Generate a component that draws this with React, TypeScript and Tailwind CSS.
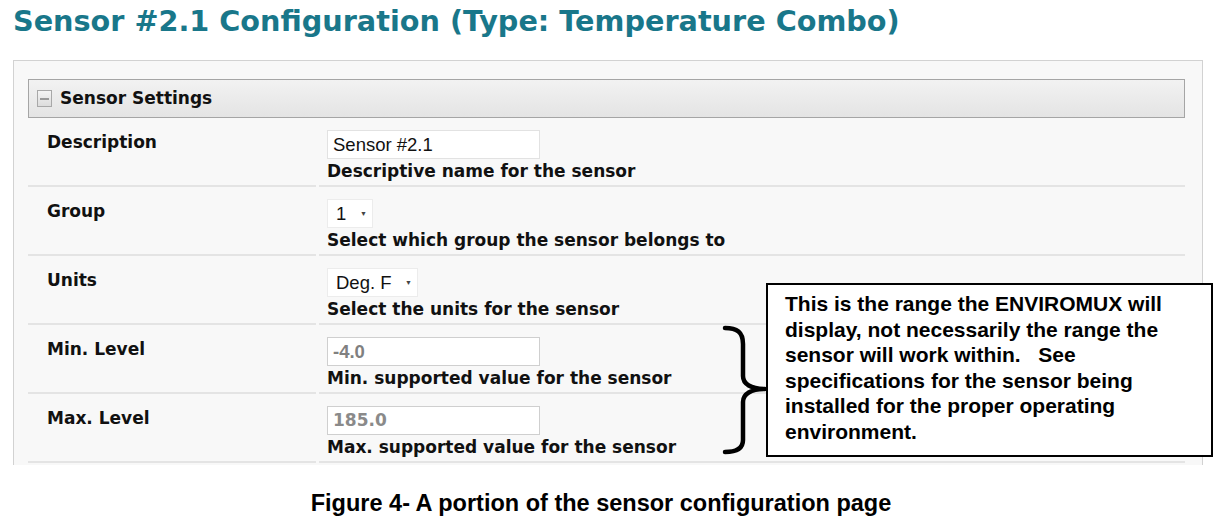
import React from "react";

const verdana = { fontFamily: '"DejaVu Sans", Verdana, sans-serif' };
const arial = { fontFamily: '"Liberation Sans", Arial, sans-serif' };

function Arrow() {
  return <span className="text-[7px] leading-none text-[#444]">▼</span>;
}

function Row({
  label,
  children,
  help,
}: {
  label: string;
  children: React.ReactNode;
  help: string;
}) {
  return (
    <>
      <div className="border-b-2 border-[#e4e4e4] pl-[19px] pt-[14px]">
        <div className="text-[17px] font-bold leading-[20px] text-[#111]" style={verdana}>
          {label}
        </div>
      </div>
      <div className="border-b-2 border-[#e4e4e4] pl-[8px] pt-[12px] pb-[2px]">
        <div className="h-[29px] flex">{children}</div>
        <div className="text-[17px] font-bold leading-[24px] text-[#111]" style={verdana}>
          {help}
        </div>
      </div>
    </>
  );
}

export default function App() {
  return (
    <div className="relative w-[1228px] h-[532px] bg-white overflow-hidden">
      <div className="pl-[13px] pt-[2px] h-[60px]">
        <h1
          className="text-[28.7px] font-bold leading-[38px] text-[#19778a]"
          style={verdana}
        >
          Sensor #2.1 Configuration (Type: Temperature Combo)
        </h1>
      </div>
      <div className="ml-[13px] w-[1190px] h-[405px] border border-b-0 border-[#d2d2d2] bg-[#f8f8f8] pl-[14px] pr-[17px] pt-[18px]">
        <div className="h-[39px] flex items-center border border-[#a5a5a5] bg-gradient-to-b from-[#f2f2f2] to-[#e4e4e4] pl-[8px]">
          <div className="w-[15px] h-[17px] border border-[#a8a8a8] bg-gradient-to-b from-[#f4f4f4] to-[#dcdcdc] flex items-center justify-center">
            <div className="w-[9px] h-[2px] bg-[#999]" />
          </div>
          <span className="ml-[8px] text-[17px] font-bold text-[#111]" style={verdana}>
            Sensor Settings
          </span>
        </div>
        <div className="grid grid-cols-[288px_1fr] gap-x-[3px]">
          <Row label="Description" help="Descriptive name for the sensor">
            <div
              className="w-[213px] bg-white border border-[#e2e2e2] pl-[5px] text-[18.5px] leading-[27px] text-[#111]"
              style={arial}
            >
              Sensor #2.1
            </div>
          </Row>
          <Row label="Group" help="Select which group the sensor belongs to">
            <div
              className="w-[46px] bg-white border border-[#ececec] pl-[8px] pr-[5px] flex items-center justify-between text-[18.5px] text-[#111]"
              style={arial}
            >
              <span>1</span>
              <Arrow />
            </div>
          </Row>
          <Row label="Units" help="Select the units for the sensor">
            <div
              className="w-[91px] bg-white border border-[#ececec] pl-[8px] pr-[5px] flex items-center justify-between text-[18.5px] text-[#111]"
              style={arial}
            >
              <span>Deg. F</span>
              <Arrow />
            </div>
          </Row>
          <Row label="Min. Level" help="Min. supported value for the sensor">
            <div
              className="w-[213px] bg-white border border-[#cfcfcf] pl-[5px] text-[18.5px] font-bold leading-[27px] text-[#808080]"
              style={arial}
            >
              -4.0
            </div>
          </Row>
          <Row label="Max. Level" help="Max. supported value for the sensor">
            <div
              className="w-[213px] bg-white border border-[#cfcfcf] pl-[5px] text-[17px] font-bold leading-[27px] text-[#8a8a8a]"
              style={verdana}
            >
              185.0
            </div>
          </Row>
        </div>
      </div>
      <div className="pt-[24px] text-center text-[23.5px] font-bold leading-[28px] text-black pr-[26px]" style={arial}>
        Figure 4- A portion of the sensor configuration page
      </div>

      <svg
        className="absolute left-[715px] top-[320px]"
        width="60"
        height="140"
        viewBox="0 0 60 140"
        fill="none"
      >
        <path
          d="M10 8 C 22 8, 28 12, 28 24 L 28 56 C 28 64, 36 69, 50 69 C 36 69, 28 74, 28 82 L 28 120 C 28 128, 22 132, 10 132"
          stroke="#000"
          strokeWidth="4.5"
          strokeLinecap="round"
          strokeLinejoin="round"
        />
      </svg>
      <div
        className="absolute left-[766px] top-[283px] w-[447px] h-[174px] border-2 border-black bg-white pl-[17px] pt-[6px] text-[21px] font-bold leading-[25.6px] text-black"
        style={arial}
      >
        <div className="whitespace-pre">This is the range the ENVIROMUX will</div>
        <div className="whitespace-pre">display, not necessarily the range the</div>
        <div className="whitespace-pre">sensor will work within.   See</div>
        <div className="whitespace-pre">specifications for the sensor being</div>
        <div className="whitespace-pre">installed for the proper operating</div>
        <div className="whitespace-pre">environment.</div>
      </div>
    </div>
  );
}
